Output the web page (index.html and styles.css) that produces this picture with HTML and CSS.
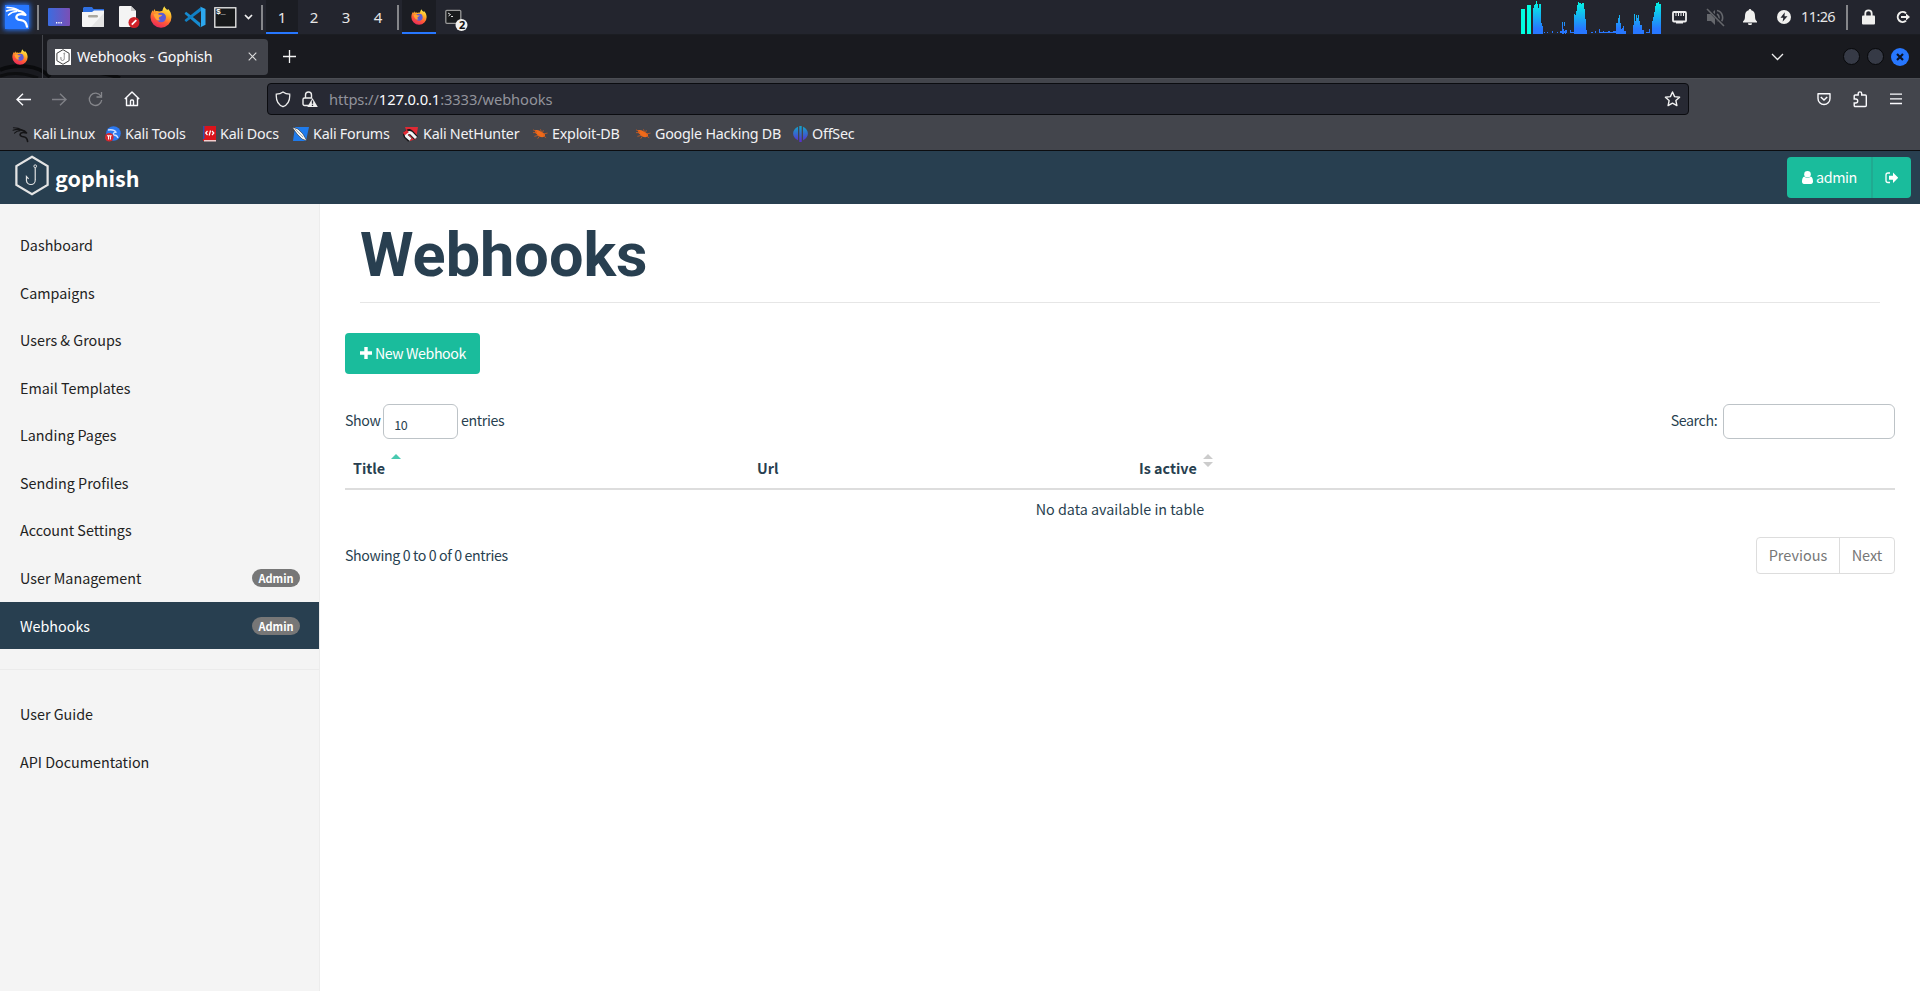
FILE: index.html
```html
<!DOCTYPE html>
<html lang="en">
<head>
<meta charset="utf-8">
<title>Webhooks - Gophish</title>
<link rel="stylesheet" href="styles.css">
</head>
<body>
<svg class="defs" width="0" height="0">
  <defs>
    <linearGradient id="fire" x1="0.75" y1="0" x2="0.3" y2="1"><stop offset="0" stop-color="#fff04a"/><stop offset=".35" stop-color="#ffae28"/><stop offset=".65" stop-color="#ff5a36"/><stop offset="1" stop-color="#e8255f"/></linearGradient>
    <linearGradient id="cpu" gradientUnits="userSpaceOnUse" x1="0" y1="0" x2="0" y2="34"><stop offset="0" stop-color="#00ffe0"/><stop offset=".85" stop-color="#2777ff"/></linearGradient>
    <linearGradient id="desk" x1="0" y1="0" x2="1" y2="0"><stop offset="0" stop-color="#3b6ce0"/><stop offset="1" stop-color="#7b4fb5"/></linearGradient>
    <linearGradient id="off" x1="0" y1="0" x2="0" y2="1"><stop offset="0" stop-color="#12a5c9"/><stop offset="1" stop-color="#5a2bd0"/></linearGradient>
    <symbol id="firefox" viewBox="0 0 22 22">
      <path fill="url(#fire)" d="M14.5.3c.3 1.700 1.500 2.500 2.700 3.600l1-.8c2 2 3.300 4.800 3.300 8A10.500 10.500 0 0 1 .5 11.300C.5 8.500 1.300 6 2.700 4.200l.5 1.600L4.500 3l1 2.200c1.500-.5 2.800-.2 3.800.3 1-.4 2-.7 3-.5.400-1.800 1-3.400 2.200-4.700z"/>
      <circle cx="11.200" cy="11.500" r="4.800" fill="#5b5bd8"/>
      <path fill="#ffa436" d="M3.500 8.500c2-1.500 4-1 5.500.2l3.200.4c-.3 1.500-2.400 1.300-3.300 2.600-.4 1.200.5 2 1.600 2.400-2.800 1.500-5.500-.6-7-5.600z"/>
    </symbol>
    <symbol id="dragon" viewBox="0 0 24 24">
      <path fill="none" stroke="currentColor" stroke-width="1.500" stroke-linecap="round" stroke-linejoin="round" d="M2 2.500c5 0 9 1 12 3M1.500 6c4-1.500 8-1.500 11-.5M3.500 10c2.500-2.500 5-3.500 8-3.500"/>
      <path fill="none" stroke="currentColor" stroke-width="2.300" stroke-linecap="round" stroke-linejoin="round" d="M13.500 5.800c3.500.2 5.500 1.700 7 4-3-.8-6-1-8 .2-2.500 2.500-.5 5 3.500 5.200 3.500.3 5.500 3 6 6.500"/>
    </symbol>
    <symbol id="bug" viewBox="0 0 16 12">
      <path fill="#f06a1a" d="M2 2c2-.5 4-.3 5 .5l5 3c1.500 1 1 3.500-.8 3.800-3 .4-6-.8-7-3L2.500 5z"/>
      <path stroke="#c85a20" stroke-width=".9" fill="none" d="M0 1.500l4 2M1.500 8.500l4-1M5 11l2-3M8 1l1 3M11 2l-1 3M11 6l4.500-1M11 8l3 2M0 4.500h4"/>
    </symbol>
    <symbol id="hexhook" viewBox="0 0 36 42">
      <path fill="none" stroke="currentColor" stroke-width="2.300" d="M18 1.800L34 11.300v19.400L18 40.200 2 30.700V11.300z"/>
      <path fill="none" stroke="currentColor" stroke-width="1.200" d="M21.300 13v12.500a4.500 4.500 0 0 1-9 .5v-4l2.200 2.500"/>
      <circle cx="21.300" cy="11.500" r="1.400" fill="none" stroke="currentColor"/>
    </symbol>
  </defs>
</svg>

<header class="panel">
  <div class="launchers">
    <span class="slot kali"><svg class="kali-logo" width="24" height="24"><use href="#dragon"/></svg></span>
    <i class="rule"></i>
    <span class="slot"><svg width="22" height="18"><rect width="22" height="18" rx="1" fill="url(#desk)"/><path stroke="#fff" stroke-width="1.500" stroke-dasharray="1.300 1" d="M8 14.800h6.500"/></svg></span>
    <span class="slot"><svg width="22" height="22"><path fill="#2f6fe0" d="M2 1h8l1.500 2H22v6H1V2z"/><path fill="#f5f5f5" d="M0 6h10l2-1.500h10V20a1 1 0 0 1-1 1H1a1 1 0 0 1-1-1z"/><path fill="#e4e4e4" d="M22 7v13a1 1 0 0 1-1 1H9z"/><rect x="6" y="9" width="10" height="2.500" rx="1.200" fill="#aaa89f"/></svg></span>
    <span class="slot doc"><svg width="22" height="22"><path fill="#f4f4f4" d="M1 1a1 1 0 0 1 1-1h11l5 5v16H2a1 1 0 0 1-1-1z"/><path fill="#c8c8c8" d="M13 0l5 5h-5z"/><circle cx="16" cy="16.500" r="5.500" fill="#cf2128"/><path stroke="#fff" stroke-width="1.800" d="M13.800 18.700l4.500-4.500"/></svg></span>
    <span class="slot"><svg width="22" height="22"><use href="#firefox"/></svg></span>
    <span class="slot"><svg width="22" height="22"><path fill="#168bd0" d="M.7 7.200l1.500-1.500 14 11.200v4.300L.8 8z"/><path fill="#1180c4" d="M.7 14.500l1.500 1.600L17 5V1L.8 13.800z"/><path fill="#2ca7ee" d="M16 .5l5.500 2.600v15.600L16 21.500c.6-.3 1-1 1-2V2.500c0-.9-.4-1.600-1-2z"/></svg></span>
    <span class="slot term"><svg width="23" height="21"><rect x=".8" y=".8" width="21" height="19.400" fill="#17191b" stroke="#f0f0f0" stroke-width="1.300"/></svg><b class="prompt">$_</b></span>
    <span class="slot"><svg width="9" height="6"><path d="M1 1l3.500 3.500L8 1" fill="none" stroke="#f0f0f0" stroke-width="1.700"/></svg></span>
    <i class="rule"></i>
    <span class="slot active">1</span><span class="slot">2</span><span class="slot">3</span><span class="slot">4</span>
    <i class="rule"></i>
    <span class="slot active"><svg width="16" height="16"><use href="#firefox"/></svg></span>
    <span class="slot task"><svg width="23" height="23"><rect x=".8" y="1.300" width="15" height="13" rx="1" fill="#191b1d" stroke="#999" stroke-width="1.300"/><path d="M3 4l2.500 1.500L3.500 7M6 7.500h2" stroke="#ddd" fill="none"/><circle cx="16.500" cy="16" r="6" fill="#f2f2f0"/></svg><b class="count">2</b></span>
  </div>
  <div class="tray">
    <svg width="140" height="34" fill="url(#cpu)"><path fill="#00ffe0" d="M0 9h4v25H0zM6 5h4v29H6z"/><path d="M12 34V8h1V5h1V4h1V1h1v3h1v4h1V4h2v19h1v3h1v8zM41 34V22h1v7h1v5zM44 34v-8h-1v-4h1v8h1v4zM53 34V14h1v1h1v-4h1V5h1V2h1v1h2v1h1V3h2v6h1v10h1v11h1v4zM95 34V23h2v-5h1v-3h1v8h1v6h1v-1h1v-2h1v5h2v3zM112 34v-9h1V14h1v7h1v-6h1v3h1v-3h1v6h1v4h2v5h2v4zM131 34V21h1v-4h1v-5h1V6h1V3h2V2h1v2h2v30z"/><path d="M22 33h1v-1h1v1h2v-1h1v1h4v-2h1v2h4v-1h1v1h2v-2h6v-1h1v3h3v-3h1v2h3v1H22zM66 33h4v-1h2v1h2v-2h1v2h3v-4h1v3h3v-1h1v1h4v-1h2v1h3v-1h3v2H66zM123 33h2v-1h3v-3h1v4z"/></svg>
    <span class="slot"><svg width="15" height="13"><rect x="1" y="1" width="13" height="9.500" rx="1" fill="none" stroke="#eee" stroke-width="1.800"/><path d="M4 2v3M6.500 2v3M9 2v3M11.500 2v3" stroke="#eee"/><path fill="#eee" d="M4 10h7v2.500H4z"/></svg></span>
    <span class="slot"><svg width="19" height="19"><path fill="#65676c" d="M1 6h4l4-4v15l-4-4H1z"/><path fill="none" stroke="#65676c" stroke-width="1.600" d="M11 6a4 4 0 0 1 0 7M11 2.500c6 1 7.500 9 3 12.500"/><path stroke="#23252d" stroke-width="3" d="M2 1l16 17"/><path stroke="#65676c" stroke-width="1.600" d="M1 1l17 17"/></svg></span>
    <span class="slot"><svg width="14" height="16"><path fill="#f0f0ee" d="M7 0a1.300 1.300 0 0 1 1.300 1.300C11 2 12 4 12 7c0 3 .6 4.400 2 5.500V13.500H0v-1C1.400 11.400 2 10 2 7c0-3 1-5 3.700-5.700A1.300 1.300 0 0 1 7 0zM5 14.200h4a2 2 0 0 1-4 0z"/></svg></span>
    <span class="slot"><svg width="14" height="14"><circle cx="7" cy="7" r="7" fill="#f0f0ee"/><path fill="#24262e" d="M7.800 2.300L3.500 7.800h2.800l-.7 3.900 4.900-5.500H7.500z"/></svg></span>
    <time>11:26</time>
    <i class="rule"></i>
    <span class="slot"><svg width="13" height="16"><path fill="none" stroke="#f0f0ee" stroke-width="1.800" d="M3.300 7V4.500a3.200 3.200 0 0 1 6.400 0V7"/><rect y="6.500" width="13" height="9" rx="1" fill="#f0f0ee"/></svg></span>
    <span class="slot"><svg width="15" height="14"><path fill="none" stroke="#f0f0ee" stroke-width="2" d="M11 3.200A5 5 0 1 0 11 10.800"/><path fill="#f0f0ee" d="M6 6h5V3.500L15 7l-4 3.500V8H6z"/></svg></span>
  </div>
</header>

<div class="tabbar">
  <svg class="wallpaper" width="220" height="43"><path d="M0 35C15 29 38 29 50 42M80 37q22-1 40 6" fill="none" stroke="#0a0b0d" stroke-width="4"/><path d="M0 41Q18 35 38 43" fill="none" stroke="#0d0e10" stroke-width="3"/></svg>
  <span class="view"><svg width="16" height="16"><use href="#firefox"/></svg></span>
  <div class="tab">
    <span class="favicon"><svg width="14" height="16"><use href="#hexhook"/></svg></span>
    <span class="tab-title">Webhooks - Gophish</span>
    <svg width="9" height="9"><path d="M.7.7l7.600 7.600M8.300.7L.7 8.300" stroke="#ddd" stroke-width="1.100"/></svg>
  </div>
  <svg class="plus" width="13" height="13"><path d="M6.500 0v13M0 6.500h13" stroke="#f4f4f4" stroke-width="1.300"/></svg>
  <div class="window-tools">
    <svg width="13" height="8"><path d="M1 1l5.500 5.500L12 1" fill="none" stroke="#eee" stroke-width="1.300"/></svg>
    <i class="knob"></i><i class="knob"></i>
    <i class="knob close"><svg width="8" height="8"><path d="M1 1l6 6M7 1L1 7" stroke="#0a1226" stroke-width="2.200"/></svg></i>
  </div>
</div>

<div class="toolbar">
  <nav class="navigation">
    <svg width="15" height="13"><path d="M7 .8L1 6.500l6 5.700M1 6.500h14" fill="none" stroke="#fbfbfe" stroke-width="1.400"/></svg>
    <svg width="15" height="13"><path d="M8 .8l6 5.700-6 5.700M14 6.500H0" fill="none" stroke="#7f8086" stroke-width="1.400"/></svg>
    <svg width="15" height="15"><path d="M12.800 4A6.200 6.200 0 1 0 13.700 8M13.500 0v5h-5" fill="none" stroke="#85868b" stroke-width="1.300"/></svg>
    <svg width="16" height="16"><path d="M.8 8L8 .9 15.200 8M2.500 6.500v8h11v-8M6.500 14.500V10a1 1 0 0 1 1-1h1a1 1 0 0 1 1 1v4.500" fill="none" stroke="#fbfbfe" stroke-width="1.400" stroke-linejoin="round"/></svg>
  </nav>
  <div class="url">
    <svg width="16" height="17"><path d="M8 1c2 1.500 4.300 2.100 6.700 2.200.4 6-1.800 10.600-6.700 12.500C3.100 13.800.9 9.200 1.300 3.200 3.700 3.100 6 2.500 8 1z" fill="none" stroke="#eee" stroke-width="1.300"/></svg>
    <svg width="16" height="17"><path d="M3.500 7V4a3 3 0 0 1 6 0v3M7 14.500H2.500a1.500 1.500 0 0 1-1.500-1.500V8.500A1.500 1.500 0 0 1 2.500 7H10" fill="none" stroke="#eee" stroke-width="1.400"/><path d="M10.500 7l5.300 9H5.300z" fill="#eee"/><path d="M10.500 9.500v3.300M10.500 13.700v1.200" stroke="#272933" stroke-width="1.300"/></svg>
    <span class="address">https://<b>127.0.0.1</b>:3333/webhooks</span>
    <svg width="17" height="16"><path d="M8.500 1l2.100 4.600 5 .6-3.700 3.400 1 5-4.400-2.500-4.400 2.500 1-5L1.400 6.200l5-.6z" fill="none" stroke="#f2f2f2" stroke-width="1.400" stroke-linejoin="round"/></svg>
  </div>
  <div class="tools">
    <svg width="14" height="14"><path d="M1 1.700h12v4.800a6 6 0 0 1-12 0z" fill="none" stroke="#fbfbfe" stroke-width="1.400" stroke-linejoin="round"/><path d="M3.800 5L7 8l3.200-3" fill="none" stroke="#fbfbfe" stroke-width="1.500"/></svg>
    <svg width="15" height="17"><path d="M1.200 7V5a1 1 0 0 1 1-1h3V2.600a1.700 1.700 0 0 1 3.500 0V4h3.600a1 1 0 0 1 1 1v9.500a1 1 0 0 1-1 1H2.200a1 1 0 0 1-1-1V12h1.500a1.700 1.700 0 0 0 0-4H1.200z" fill="none" stroke="#fbfbfe" stroke-width="1.400"/></svg>
    <svg width="12" height="12"><path d="M0 1.200h12M0 5.800h12M0 10.500h12" stroke="#fbfbfe" stroke-width="1.300"/></svg>
  </div>
</div>

<nav class="bookmarks">
  <a class="b1"><svg class="black" width="17" height="17"><use href="#dragon"/></svg>Kali Linux</a>
  <a class="b2"><svg width="16" height="16"><circle cx="8.500" cy="7.500" r="7.300" fill="#2b78f0"/><path d="M3 4q6-1 8 2-4 1-2 3 3 0 4 3" fill="none" stroke="#cfe0ff" stroke-width="1.300"/><circle cx="4.300" cy="11.300" r="4.300" fill="#d6282e"/><path d="M2 9.800h4.700M3.500 10v3.500M5.400 10v3.500" stroke="#fff"/></svg>Kali Tools</a>
  <a class="b3"><svg width="13" height="16"><path fill="#db141b" d="M0 0h13v15H0z"/><path fill="#2a4fae" d="M0 0h1.500v13H0z"/><path fill="#f5cdcd" d="M1 14h12V15.500H1z"/><path d="M4.500 5L2.700 7l1.800 2M9 5l1.800 2L9 9M7.500 4.500l-1.300 5" stroke="#fff" stroke-width="1.200" fill="none"/></svg>Kali Docs</a>
  <a class="b4"><svg width="17" height="16"><path fill="#1f7bec" d="M3 1h14l-3 14H1z"/><path fill="#f5f5f2" stroke="#222a38" stroke-width=".6" d="M0 1l6 2 5 5 4 7-5-2-5-5z"/><path d="M3 3l8 8" stroke="#8a8c91" stroke-width=".7"/></svg>Kali Forums</a>
  <a class="b5"><svg width="17" height="16"><path fill="#e12a34" d="M3 1h13l-2 12-6 2z"/><path fill="none" stroke="#161618" stroke-width="5" d="M14 12L9 6.500C7 4.500 2.500 7 4 10l4 4"/><path fill="none" stroke="#f2f2f2" stroke-width="3" d="M14 12L9 7C7 5.500 3.500 7.500 4.500 10l4 3.500"/><path stroke="#e12a34" stroke-width="3" d="M1.800 8l4-3"/></svg>Kali NetHunter</a>
  <a class="b6"><svg width="15" height="12"><use href="#bug"/></svg>Exploit-DB</a>
  <a class="b7"><svg width="15" height="12"><use href="#bug"/></svg>Google Hacking DB</a>
  <a class="b8"><svg width="15" height="16" fill="url(#off)"><path d="M5 .7v13.500C-1.500 11.500-1.500 3.500 5 .7zM10 .7c6.500 2.800 6.500 10.800 0 13.500zM6.300 0h2.400v16H6.300z"/></svg>OffSec</a>
</nav>

<div class="appbar">
  <a class="brand"><svg width="36" height="41"><use href="#hexhook"/></svg><span>gophish</span></a>
  <div class="account">
    <a class="user"><svg width="11" height="13"><circle cx="5.500" cy="3.300" r="3.300"/><path d="M2.200 5.500a4.500 4.500 0 0 0 6.600 0C10.500 6 11 8.500 11 10.800 11 12 10.300 13 9 13H2C.7 13 0 12 0 10.800 0 8.500.5 6 2.200 5.500z"/></svg><span>admin</span></a>
    <a class="exit"><svg width="13" height="12"><path d="M5 1H3a2 2 0 0 0-2 2v5.500a2 2 0 0 0 2 2h2" fill="none" stroke="#fff" stroke-width="1.300"/><path d="M4 3.800h4V.6l5.200 5.200L8 11V7.800H4z"/></svg></a>
  </div>
</div>

<div class="app">
  <aside class="sidebar">
    <a>Dashboard</a>
    <a>Campaigns</a>
    <a>Users &amp; Groups</a>
    <a>Email Templates</a>
    <a>Landing Pages</a>
    <a>Sending Profiles</a>
    <a>Account Settings</a>
    <a>User Management<span class="badge">Admin</span></a>
    <a class="current">Webhooks<span class="badge">Admin</span></a>
    <hr>
    <a>User Guide</a>
    <a>API Documentation</a>
  </aside>
  <main>
    <h1><span>Webhooks</span></h1>
    <button class="create"><svg width="12" height="12"><path d="M4.300 0h3.400v4.300H12v3.400H7.700V12H4.300V7.700H0V4.300h4.300z"/></svg><span>New Webhook</span></button>
    <div class="controls">
      <label>Show <span class="select">10</span> entries</label>
      <label>Search: <input type="text"></label>
    </div>
    <table>
      <thead><tr>
        <th class="c1">Title<svg width="10" height="13"><path d="M0 5l5-5 5 5z" fill="#49c9b0"/></svg></th>
        <th class="c2">Url</th>
        <th class="c3">Is active<svg width="10" height="13"><path d="M0 5l5-5 5 5zM0 8h10l-5 5z" fill="#ccc"/></svg></th>
        <th></th>
      </tr></thead>
      <tbody><tr><td colspan="4">No data available in table</td></tr></tbody>
    </table>
    <div class="footer">
      <span>Showing 0 to 0 of 0 entries</span>
      <div class="pages"><a>Previous</a><a>Next</a></div>
    </div>
  </main>
</div>
</body>
</html>
```

FILE: styles.css
```css
* { box-sizing: border-box; }
body { margin: 0; width: 1920px; height: 991px; overflow: hidden; display: flex; flex-direction: column; background: #fff; font-family: "Noto Sans", sans-serif; }
svg { display: block; flex: none; }
.defs { position: absolute; }

/* desktop panel */
.panel { height: 35px; flex: none; display: flex; justify-content: space-between; background: #23252e; border-bottom: 1px solid #1b1d22; color: #e6e6e6; font-size: 15px; }
.launchers { display: grid; grid-template-columns: 34px 8px 34px 34px 34px 34px 33px 28px 19px 8px 32px 32px 32px 32px 8px 34px 38px; height: 34px; }
.tray { display: grid; grid-template-columns: 140px 36px 36px 34px 34px 41px 10px 33px 35px; height: 34px; width: 399px; }
.slot { display: flex; align-items: center; justify-content: center; height: 34px; position: relative; }
.active { background: #1b1d23; border-bottom: 2px solid #2777ff; padding-top: 2px; }
.rule { width: 2px; height: 25px; background: #85868a; align-self: center; justify-self: center; }
.kali-logo { background: #2777ff; color: #fff; box-shadow: 0 0 5px 1px #2777ff; }
.doc { padding-left: 3px; }
.prompt { position: absolute; left: 5px; top: 7px; font: bold 8px/10px "Liberation Mono", monospace; color: #fff; }
.task svg { margin-top: 7px; margin-left: 2px; }
.count { position: absolute; left: 23px; top: 18px; color: #111; font-size: 11px; line-height: 14px; }
.tray time { line-height: 33px; font-size: 14.5px; letter-spacing: -.6px; }

/* browser */
.tabbar { height: 44px; flex: none; display: flex; align-items: center; background: #191a1f; border-bottom: 1px solid #4b4d53; position: relative; }
.wallpaper { position: absolute; left: 0; top: 0; }
.view { width: 43px; height: 43px; display: flex; align-items: center; padding-left: 12px; border-right: 1px solid #44464c; position: relative; }
.tab { position: relative; margin-left: 4px; width: 221px; height: 36px; border-radius: 4px; background: #42444b; display: flex; align-items: center; padding: 0 11px 0 8px; color: #fbfbfe; font-size: 14.3px; letter-spacing: -.18px; }
.favicon { width: 16px; height: 16px; background: #fff; color: #222; display: flex; justify-content: center; }
.tab-title { margin-left: 6px; flex: 1; white-space: nowrap; }
.plus { margin-left: 15px; }
.window-tools { margin-left: auto; display: flex; align-items: center; padding-right: 11px; }
.window-tools > svg { margin-right: 59px; }
.knob { width: 17px; height: 17px; border-radius: 50%; background: #363a46; border: 1px solid #07080a; margin-right: 7px; display: grid; place-items: center; }
.close { width: 18px; height: 18px; background: #2777ff; border: 0; margin-right: 0; }
.toolbar { height: 41px; flex: none; background: #43454c; display: flex; align-items: center; color: #fbfbfe; padding-bottom: 1px; }
.navigation { width: 267px; display: flex; align-items: center; gap: 21px; padding-left: 16px; }
.url { width: 1422px; height: 32px; border: 1px solid #0b0c10; border-radius: 4px; background: #272933; display: flex; align-items: center; padding: 0 7px; }
.url svg + svg { margin-left: 11px; }
.address { flex: 1; margin-left: 11px; font-size: 14.7px; letter-spacing: -.1px; color: #92939b; }
.address b { font-weight: 400; color: #fbfbfe; }
.tools { margin-left: auto; display: flex; align-items: center; gap: 22px; padding-right: 18px; }
.bookmarks { height: 31px; flex: none; background: #43454c; border-bottom: 1px solid #0c0d10; color: #f2f2f4; font-size: 14.3px; letter-spacing: -.22px; line-height: 20px; display: flex; padding: 4px 0 0 12px; }
.bookmarks a { display: flex; align-items: center; gap: 4px; height: 20px; white-space: nowrap; }
.black { color: #141416; }
.b1 { width: 93px; } .b2 { width: 98px; } .b3 { width: 89px; } .b4 { width: 110px; }
.b5 { width: 130px; } .b6 { width: 103px; } .b7 { width: 158px; }
.b6, .b7 { padding-left: 1px; }

/* application */
.appbar, .app { font-family: "Noto Sans CJK SC", sans-serif; font-size: 14.33px; line-height: 22px; }
.appbar { height: 53px; flex: none; background: #283f50; display: flex; justify-content: space-between; }
.brand { display: flex; padding: 4px 0 0 14px; color: #fff; font-size: 21.5px; font-weight: 700; }
.brand svg { color: #e4e4e4; }
.brand span { margin: 11px 0 0 5px; line-height: 24px; }
.account { display: flex; margin: 6px 9px 0 0; height: 41px; border-radius: 4px; overflow: hidden; background: #1abc9c; fill: #fff; color: #fff; letter-spacing: -.4px; }
.account a { display: flex; align-items: center; }
.user { width: 84px; padding-left: 15px; gap: 3px; }
.user span { margin-bottom: 1px; }
.exit { width: 40px; border-left: 2px solid #20aa91; padding-left: 12px; }
.app { flex: 1; display: flex; color: #283f50; }
.sidebar { width: 320px; background: #f4f4f4; border-right: 1px solid #ececec; padding-top: 17.3px; color: #222; }
.sidebar a { height: 47.57px; display: flex; align-items: center; padding: 0 19px 0 20px; }
.sidebar .current { background: #283f50; color: #fff; }
.sidebar hr { border: 0; border-top: 1px solid #ebebeb; margin: 20px 0 20px; }
.badge { margin-left: auto; width: 48px; height: 18px; border-radius: 9px; background: #777; color: #fff; font-size: 11px; line-height: 18px; font-weight: 700; text-align: center; }
main { flex: 1; padding: 0 25px; display: flex; flex-direction: column; }
h1 { margin: 0 15px; height: 99px; flex: none; border-bottom: 1px solid #e6e6e6; font: 700 61.2px/72px Roboto, sans-serif; padding-top: 15px; }
.create { margin-top: 30px; width: 135px; height: 41px; border: 0; border-radius: 4px; background: #1abc9c; color: #fff; fill: #fff; font: inherit; font-size: 14.2px; letter-spacing: -.42px; display: flex; align-items: center; gap: 3px; padding: 0 15px 1px; white-space: nowrap; }
.controls { display: flex; justify-content: space-between; margin-top: 30px; height: 35px; font-size: 14.2px; letter-spacing: -.38px; }
.controls label { display: flex; height: 31px; align-items: center; white-space: pre; }
.select, input { height: 35px; border: 1px solid #bdc3c7; border-radius: 6px; background: #fff; align-self: flex-start; }
.select { width: 75px; font-size: 12.5px; padding: 9px 10px 0; }
input { width: 172px; margin: 0 0 0 3px; }
table { margin-top: 9px; border-collapse: collapse; table-layout: fixed; width: 100%; }
th { height: 41px; border-bottom: 2px solid #ddd; text-align: left; padding: 0 8px; }
th svg { display: inline-block; vertical-align: 7px; margin: -10px 0 0 6px; }
.c1 { width: 404px; } .c2 { width: 382px; } .c3 { width: 420px; }
td { text-align: center; height: 39px; padding: 0; }
.footer { display: flex; justify-content: space-between; margin-top: 9px; height: 38px; line-height: 36px; font-size: 14.2px; }
.footer > span { letter-spacing: -.38px; }
.pages { width: 139px; height: 37px; display: flex; border: 1px solid #ddd; border-radius: 4px; color: #777; }
.pages a { flex: 1; text-align: center; font-size: 14.5px; line-height: 34px; }
.pages a:first-child { flex: 0 0 83px; border-right: 1px solid #ddd; }
```
